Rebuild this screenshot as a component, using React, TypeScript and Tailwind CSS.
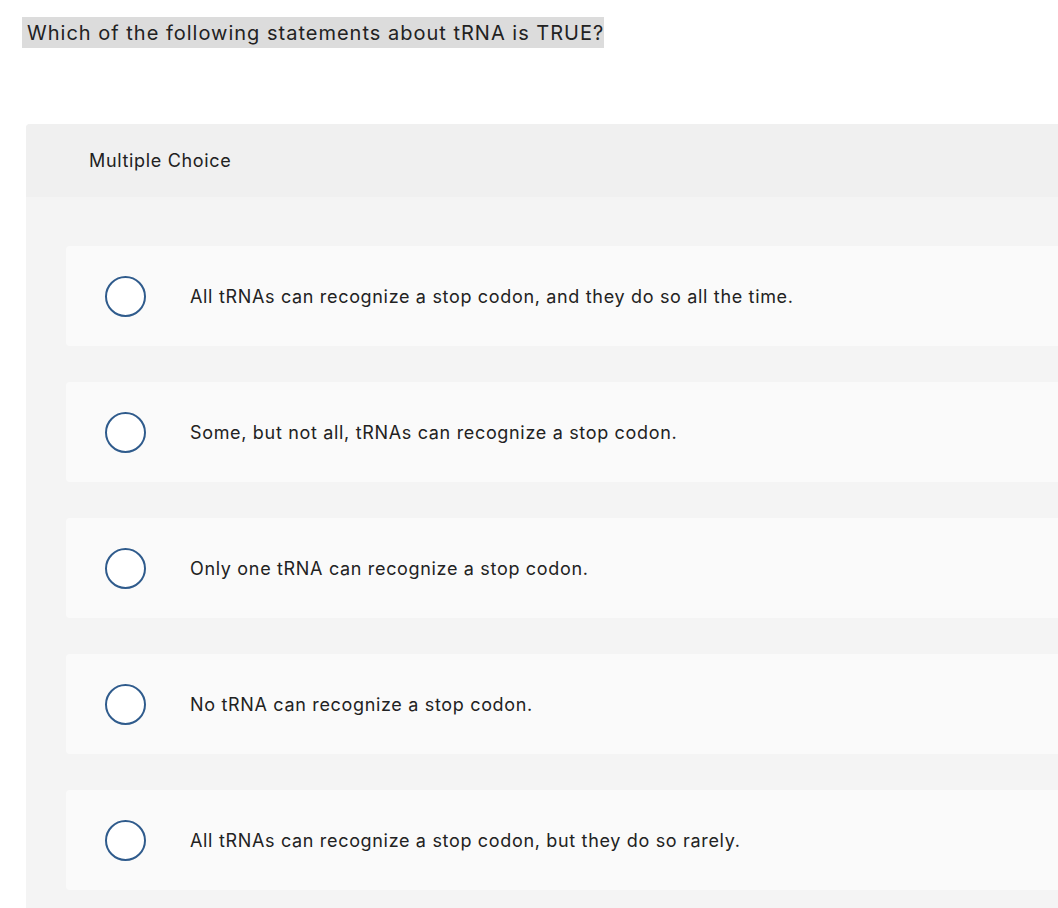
import React from 'react';

const options = [
  'All tRNAs can recognize a stop codon, and they do so all the time.',
  'Some, but not all, tRNAs can recognize a stop codon.',
  'Only one tRNA can recognize a stop codon.',
  'No tRNA can recognize a stop codon.',
  'All tRNAs can recognize a stop codon, but they do so rarely.',
];

const App = () => {
  return (
    <div
      className="w-[1058px] h-[908px] overflow-hidden bg-white text-[#222]"
      style={{ fontFamily: 'Inter, "Open Sans", sans-serif' }}
    >
      <div className="pt-[17px] pl-[22px]">
        <h1 className="inline-block bg-[#dcdcdc] h-[31px] leading-[32px] pl-[5px] pr-0 text-[20px] tracking-[1px] text-[#222]">
          Which of the following statements about tRNA is TRUE?
        </h1>
      </div>
      <div className="mt-[76px] ml-[26px] w-[1080px] rounded-tl-[4px] bg-[#f4f4f4] pb-[40px]">
        <div className="h-[73px] flex items-center pl-[63px] bg-[#f0f0f0] rounded-tl-[4px] text-[18px] tracking-[0.67px]">
          Multiple Choice
        </div>
        <div className="pt-[49px] pl-[40px] flex flex-col gap-[36px]">
          {options.map((o) => (
            <div
              key={o}
              className="h-[100px] bg-[#fafafa] rounded-[4px] flex items-center"
            >
              <div className="ml-[39px] w-[41px] h-[41px] rounded-full border-2 border-[#2f5b8c] bg-white shrink-0" />
              <span className="ml-[44px] text-[18px] tracking-[0.67px]">{o}</span>
            </div>
          ))}
        </div>
      </div>
    </div>
  );
};

export default App;
